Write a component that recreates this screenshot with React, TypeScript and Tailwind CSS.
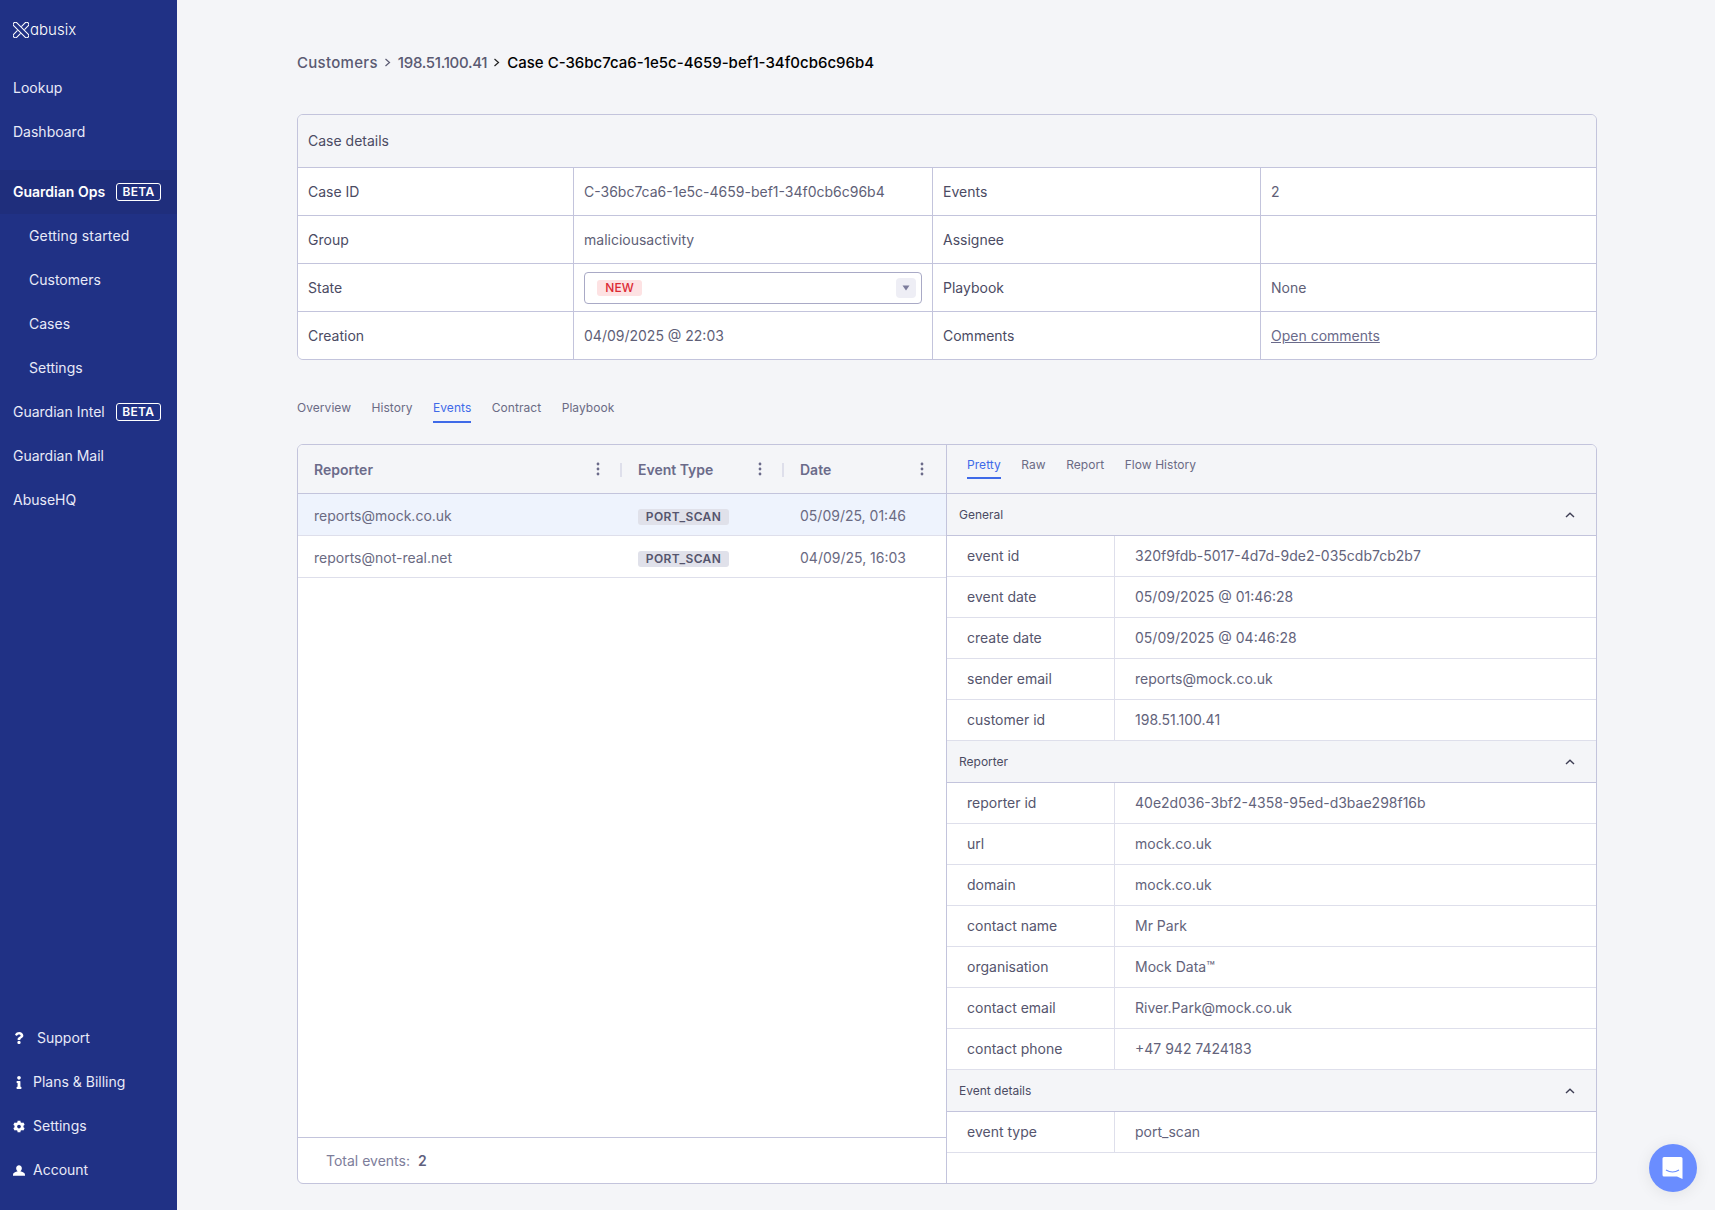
import { FaQuestion, FaInfo, FaCog } from "react-icons/fa";

const Logo = () => (
  <svg width="16" height="16" viewBox="0 0 17 17" fill="none" stroke="#fff" strokeWidth="1.1" className="mr-[1px] mt-px">
    <rect x="-2.2" y="6.2" width="21.4" height="4.6" rx="2.3" transform="rotate(45 8.5 8.5)" />
    <g transform="rotate(-45 8.5 8.5)">
      <path d="M5.6 6.2 H0.1 A2.3 2.3 0 0 0 0.1 10.8 H5.6" />
      <path d="M11.4 6.2 H16.9 A2.3 2.3 0 0 1 16.9 10.8 H11.4" />
    </g>
  </svg>
);

const UserIcon = () => (
  <svg width="13" height="11" viewBox="0 0 12.5 11" fill="#fff">
    <path d="M6.25 0 C8 0 9.2 1.4 9.2 3.2 C9.2 4.6 8.5 5.8 7.6 6.4 C9.8 7 12.5 7.8 12.5 9.8 V11 H0 V9.8 C0 7.8 2.7 7 4.9 6.4 C4 5.8 3.3 4.6 3.3 3.2 C3.3 1.4 4.5 0 6.25 0 Z" />
  </svg>
);

const SideLink = ({ label, sub, badge, active, wide }: { label: string; sub?: boolean; badge?: boolean; active?: boolean; wide?: boolean }) => (
  <div className={`h-11 flex items-center text-sm ${sub ? "pl-[29px]" : "pl-[13px]"} ${active ? "bg-[#1f2e7c] font-semibold text-white" : "text-[#e8eaf8]"} ${wide ? "tracking-[0.15px]" : ""}`}>
    <span>{label}</span>
    {badge && (
      <span className="ml-[11px] h-[18px] w-[45px] rounded-[3px] border border-white flex items-center justify-center text-xs font-semibold text-white tracking-[0.3px]">
        BETA
      </span>
    )}
  </div>
);

const BottomLink = ({ icon, label, gap }: { icon: React.ReactNode; label: string; gap: string }) => (
  <div className={`h-11 flex items-center pl-[13px] text-sm text-[#e8eaf8] ${gap}`}>
    <span className="w-3 flex justify-center text-white text-[12px]">{icon}</span>
    <span>{label}</span>
  </div>
);

const Chevron = () => (
  <svg width="12" height="8" viewBox="0 0 12 8" fill="none" stroke="#3f3f55" strokeWidth="1.4">
    <path d="M2 6 L6 2.2 L10 6" />
  </svg>
);

const Kebab = () => (
  <svg width="4" height="14" viewBox="0 0 4 14" fill="#6b6b8a">
    <circle cx="2" cy="2" r="1.4" />
    <circle cx="2" cy="7" r="1.4" />
    <circle cx="2" cy="12" r="1.4" />
  </svg>
);

const Tab = ({ label, active, line }: { label: string; active?: boolean; line: string }) => (
  <div className={`relative text-xs tracking-[0.05px] ${active ? "text-[#3f6ae8]" : "text-[#6b6b85]"}`}>
    {label}
    {active && <span className={`absolute left-0 right-0 h-0.5 bg-[#3f6ae8] ${line}`} />}
  </div>
);

const Label = ({ children, last }: { children?: React.ReactNode; last?: boolean }) => (
  <div className={`h-12 flex items-center px-[10px] text-sm text-[#4b4b63] ${last ? "" : "border-r border-[#c3c4dc]"}`}>{children}</div>
);
const Value = ({ children, last }: { children?: React.ReactNode; last?: boolean }) => (
  <div className={`h-12 flex items-center px-[10px] text-sm text-[#5f5f77] ${last ? "" : "border-r border-[#c3c4dc]"}`}>{children}</div>
);

const Section = ({ title, rows }: { title: string; rows: [string, string][] }) => (
  <div>
    <div className="h-[42px] bg-[#f4f5f8] border-b border-[#c3c4dc] flex items-center justify-between pl-[12px] pr-[20px] text-xs text-[#4b4b63]">
      <span>{title}</span>
      <Chevron />
    </div>
    {rows.map(([k, v]) => (
      <div key={k} className="h-[41px] grid grid-cols-[168px_1fr] border-b border-[#dedfeb] bg-white text-sm">
        <div className="flex items-center pl-5 border-r border-[#dedfeb] text-[#55556d]">{k}</div>
        <div className="flex items-center pl-5 text-[#63637b]">{v}</div>
      </div>
    ))}
  </div>
);

const Badge = () => (
  <span className="inline-flex items-center justify-center h-4 w-[91px] rounded-[3px] bg-[#e0e1ea] text-xs font-semibold tracking-[0.4px] text-[#55556d]">
    PORT_SCAN
  </span>
);

const EventRow = ({ who, when, selected }: { who: string; when: string; selected?: boolean }) => (
  <div className={`h-[42px] grid grid-cols-[324px_162px_1fr] items-center border-b border-[#dedfeb] text-sm text-[#6a6a82] ${selected ? "bg-[#eef3fd]" : ""}`}>
    <div className="pl-4 pt-[2px]">{who}</div>
    <div className="pl-4 pt-[4px] flex"><Badge /></div>
    <div className="pl-4 pt-[2px]">{when}</div>
  </div>
);

const HeadCell = ({ label, divider }: { label: string; divider?: boolean }) => (
  <div className="relative h-full flex items-center justify-between pl-4 pr-[22px] pt-[2px] text-sm font-semibold text-[#6b6b8a]">
    <span>{label}</span>
    <span className="flex -mt-[2px]"><Kebab /></span>
    {divider && <span className="absolute right-0 top-[18px] h-[14px] w-0.5 bg-[#dedfeb]" />}
  </div>
);

export default function App() {
  return (
    <div className="w-[1715px] h-[1210px] overflow-hidden flex bg-[#f4f5f8] font-[Inter,sans-serif] relative antialiased">
      <aside className="w-[177px] shrink-0 bg-[#203185] flex flex-col justify-between">
        <div>
          <div className="h-[66px] pl-[13px] pt-[21px] flex items-start text-white">
            <Logo />
            <span className="text-[15px] leading-[18px] font-light [font-feature-settings:'cv11']">abusix</span>
          </div>
          <SideLink label="Lookup" />
          <SideLink label="Dashboard" />
          <div className="h-[16px]" />
          <SideLink label="Guardian Ops" badge active />
          <SideLink label="Getting started" sub wide />
          <SideLink label="Customers" sub />
          <SideLink label="Cases" sub />
          <SideLink label="Settings" sub />
          <SideLink label="Guardian Intel" badge />
          <SideLink label="Guardian Mail" />
          <SideLink label="AbuseHQ" />
        </div>
        <div className="pb-[18px]">
          <BottomLink icon={<FaQuestion />} label="Support" gap="gap-3" />
          <BottomLink icon={<FaInfo className="text-[13px]" />} label="Plans & Billing" gap="gap-2" />
          <BottomLink icon={<FaCog className="text-[13px]" />} label="Settings" gap="gap-2" />
          <BottomLink icon={<UserIcon />} label="Account" gap="gap-2" />
        </div>
      </aside>

      <main className="w-[1300px] ml-[120px]">
        <div className="h-[114px] pt-[51px] flex items-start gap-[6px] text-[15px] leading-[24px] font-medium text-[#5a5a72]">
          <span className="tracking-[0.3px]">Customers</span>
          <svg width="8" height="24" viewBox="0 0 8 24" fill="none" stroke="#5a5a72" strokeWidth="1.2"><path d="M1.5 8 L5.5 11.5 L1.5 15" /></svg>
          <span className="tracking-[-0.3px]">198.51.100.41</span>
          <svg width="8" height="24" viewBox="0 0 8 24" fill="none" stroke="#222" strokeWidth="1.2"><path d="M1.5 8 L5.5 11.5 L1.5 15" /></svg>
          <span className="text-black">Case C-36bc7ca6-1e5c-4659-bef1-34f0cb6c96b4</span>
        </div>

        <div className="border border-[#c3c4dc] rounded-md overflow-hidden">
          <div className="h-[53px] bg-[#f4f5f8] flex items-center px-[10px] text-sm text-[#4b4b63] border-b border-[#c3c4dc]">Case details</div>
          <div className="grid grid-cols-[276px_359px_328px_1fr] bg-white [&>div]:border-b [&>div]:border-b-[#c3c4dc] [&>div:nth-last-child(-n+4)]:border-b-0 [&>div:nth-last-child(-n+4)]:h-[47px]">
            <Label>Case ID</Label>
            <Value>C-36bc7ca6-1e5c-4659-bef1-34f0cb6c96b4</Value>
            <Label>Events</Label>
            <Value last>2</Value>
            <Label>Group</Label>
            <Value>maliciousactivity</Value>
            <Label>Assignee</Label>
            <Value last />
            <Label>State</Label>
            <Value>
              <div className="w-full h-8 rounded border border-[#a9aac6] flex items-center justify-between pl-[12px] pr-[5px]">
                <span className="h-4 w-[45px] rounded-[3px] bg-[#fde2e3] text-xs font-medium text-[#dc2a34] flex items-center justify-center">NEW</span>
                <span className="w-5 h-5 rounded bg-[#eeeef5] flex items-center justify-center">
                  <svg width="8" height="6" viewBox="0 0 8 6" fill="#7c7c9c"><path d="M0.5 0.5 H7.5 L4 5.5 Z" /></svg>
                </span>
              </div>
            </Value>
            <Label>Playbook</Label>
            <Value last>None</Value>
            <Label>Creation</Label>
            <Value>04/09/2025 @ 22:03</Value>
            <Label>Comments</Label>
            <Value last><span className="underline text-[#6a6a8a]">Open comments</span></Value>
          </div>
        </div>

        <div className="flex items-start gap-[20.5px] pt-[40px] h-[84px] leading-[18px]">
          <Tab line="-bottom-[7px]" label="Overview" />
          <Tab line="-bottom-[7px]" label="History" />
          <Tab line="-bottom-[7px]" label="Events" active />
          <Tab line="-bottom-[7px]" label="Contract" />
          <Tab line="-bottom-[7px]" label="Playbook" />
        </div>

        <div className="h-[740px] border border-[#c3c4dc] rounded-md overflow-hidden grid grid-cols-[649px_1fr] bg-white">
          <div className="flex flex-col border-r border-[#c3c4dc]">
            <div className="h-[49px] shrink-0 bg-[#f4f5f8] border-b border-[#c3c4dc] grid grid-cols-[324px_162px_1fr]">
              <HeadCell label="Reporter" divider />
              <HeadCell label="Event Type" divider />
              <HeadCell label="Date" />
            </div>
            <EventRow who="reports@mock.co.uk" when="05/09/25, 01:46" selected />
            <EventRow who="reports@not-real.net" when="04/09/25, 16:03" />
            <div className="flex-1" />
            <div className="h-[46px] border-t border-[#c3c4dc] flex items-center pl-[28px] text-sm text-[#7d7d9a]">
              Total events:<span className="ml-2 font-semibold text-[#5f5f7d]">2</span>
            </div>
          </div>
          <div>
            <div className="h-[49px] bg-[#f4f5f8] border-b border-[#c3c4dc] flex items-start gap-[20.5px] pl-5 pt-[12px] leading-[18px]">
              <Tab line="-bottom-[6px]" label="Pretty" active />
              <Tab line="-bottom-[6px]" label="Raw" />
              <Tab line="-bottom-[6px]" label="Report" />
              <Tab line="-bottom-[6px]" label="Flow History" />
            </div>
            <Section
              title="General"
              rows={[
                ["event id", "320f9fdb-5017-4d7d-9de2-035cdb7cb2b7"],
                ["event date", "05/09/2025 @ 01:46:28"],
                ["create date", "05/09/2025 @ 04:46:28"],
                ["sender email", "reports@mock.co.uk"],
                ["customer id", "198.51.100.41"],
              ]}
            />
            <Section
              title="Reporter"
              rows={[
                ["reporter id", "40e2d036-3bf2-4358-95ed-d3bae298f16b"],
                ["url", "mock.co.uk"],
                ["domain", "mock.co.uk"],
                ["contact name", "Mr Park"],
                ["organisation", "Mock Data™"],
                ["contact email", "River.Park@mock.co.uk"],
                ["contact phone", "+47 942 7424183"],
              ]}
            />
            <Section title="Event details" rows={[["event type", "port_scan"]]} />
          </div>
        </div>
      </main>

      <div className="absolute left-[1649px] top-[1144px] w-12 h-12 rounded-full bg-[#6a8dff] shadow-[0_2px_16px_rgba(0,0,0,0.08)] flex items-center justify-center">
        <svg width="22" height="24" viewBox="0 0 22 24" fill="#fff">
          <path d="M2 1 H19 A1.5 1.5 0 0 1 20.5 2.5 V23 L15 20.5 H2 A1.5 1.5 0 0 1 0.5 19 V2.5 A1.5 1.5 0 0 1 2 1 Z" />
          <path d="M4 14 Q10.5 18 17 14" fill="none" stroke="#6a8dff" strokeWidth="1.2" />
        </svg>
      </div>
    </div>
  );
}
